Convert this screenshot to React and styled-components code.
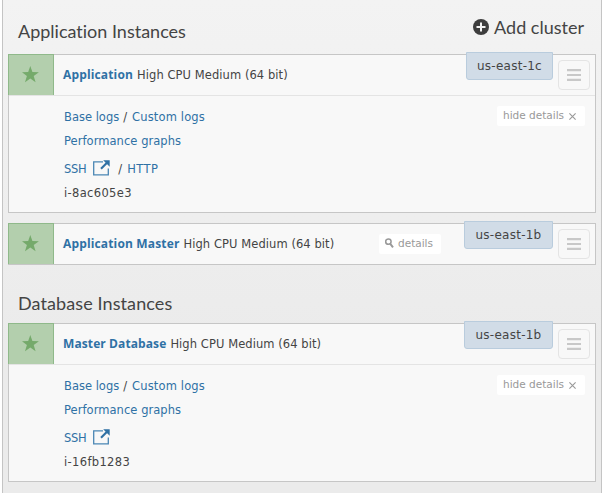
import React from "react";
import styled, { createGlobalStyle } from "styled-components";

const Global = createGlobalStyle`
  * { box-sizing: border-box; }
  body { margin: 0; background: #fff; overflow: hidden; }
`;

const Panel = styled.main`
  width: 600px;
  height: 493px;
  margin-left: 2px;
  padding: 0 5px;
  border: solid #c4c4c4;
  border-width: 0 1px;
  background: linear-gradient(#f3f3f3, #ebebeb 70%, #ebebeb);
  color: #444;
  font: 11.5px/24px "DejaVu Sans", sans-serif;
`;

const SectionHeader = styled.header`
  display: flex;
  justify-content: space-between;
  height: ${(p) => p.$height}px;
  padding: ${(p) => p.$top}px 12px 0 10px;
`;

const Title = styled.h2`
  margin: 0;
  font: 400 18px/24px Lato, sans-serif;
  font-variant-ligatures: none;
  letter-spacing: ${(p) => p.$spacing || 0}px;
`;

const AddButton = styled.button`
  display: flex;
  align-items: center;
  gap: 5px;
  height: 24px;
  margin-top: -4px;
  padding: 0;
  border: 0;
  background: none;
  color: #444;
  font: 400 18px/24px Lato, sans-serif;
`;

const Card = styled.article`
  height: ${(p) => (p.$open ? 159 : 42)}px;
  margin-bottom: 10px;
  border: 1px solid #c6c6c6;
  background: #f8f8f8;
`;

const CardRow = styled.div`
  display: flex;
  align-items: flex-start;
  height: ${(p) => (p.$open ? 41 : 40)}px;
  border-bottom: ${(p) => (p.$open ? "1px solid #e4e4e4" : "0")};
`;

const Status = styled.div`
  display: grid;
  place-items: center;
  flex: none;
  width: 46px;
  height: 41px;
  margin: -1px 9px 0 -1px;
  padding: 0 1px 1px 0;
  border: 1px solid #8fb98a;
  border-bottom: 0;
  background: #b3cfad;
`;

const Name = styled.div`
  flex: 1;
  display: flex;
  gap: 4px;
  line-height: 40px;
  white-space: nowrap;
`;

const Strong = styled.a`
  color: #2f71a5;
  font: 700 12px/40px "Open Sans", sans-serif;
  letter-spacing: ${(p) => p.$spacing}px;
`;

const Size = styled.span`
  letter-spacing: 0.07px;
`;

const Pill = styled.button`
  display: flex;
  align-items: center;
  flex: none;
  gap: ${(p) => p.$gap}px;
  width: ${(p) => p.$width}px;
  height: 20px;
  margin: ${(p) => p.$margin || "0"};
  padding: 0 0 2px 6px;
  border: 0;
  border-radius: 2px;
  background: #fff;
  color: #999;
  font: 10.5px/18px "DejaVu Sans", sans-serif;
`;

const Zone = styled.div`
  flex: none;
  height: 28px;
  margin: -3px 5px 0 0;
  width: ${(p) => p.$width}px;
  border: 1px solid #b9ccdd;
  border-radius: 0 0 3px 3px;
  background: #d1dce7;
  font-size: 12px;
  line-height: 26px;
  text-align: center;
  letter-spacing: 0.25px;
`;

const MenuButton = styled.button`
  display: grid;
  place-items: center;
  flex: none;
  width: 32px;
  height: 30px;
  margin: 5px 5px 0 0;
  padding: 0;
  border: 1px solid #e4e4e4;
  border-radius: 4px;
  background: #f8f8f8;
`;

const Details = styled.div`
  display: flex;
  justify-content: space-between;
  padding: 9px 10px 0 55px;
`;

const Links = styled.div`
  display: flex;
  flex-direction: column;
`;

const LinkLine = styled.div`
  display: flex;
  align-items: center;
  height: 24px;
  margin-top: ${(p) => (p.$gap ? 4 : 0)}px;
  letter-spacing: ${(p) => p.$spacing || 0}px;
  white-space: pre;
`;

const Link = styled.a`
  color: #2f71a5;
  letter-spacing: ${(p) => (p.$spacing ? `${p.$spacing}px` : "inherit")};
`;

const Slash = styled.span`
  margin: 0 5px 0 4px;
`;

const External = styled.svg`
  margin: -3px 4px 0 7px;
`;

function Star() {
  return (
    <svg width="18" height="17" viewBox="0.7 0 18 17">
      <path fill="#75aa6b" d="M9 0 11.1 6.1 17.6 6.2 12.4 10.1 14.3 16.3 9 12.6 3.7 16.3 5.6 10.1.7 6.2 6.9 6.1Z" />
    </svg>
  );
}

function MenuIcon() {
  return (
    <svg width="14" height="12" viewBox="0 0 14 12">
      <path fill="none" stroke="#c8c8c8" strokeWidth="2.2" d="M0 1.1H14M0 6H14M0 10.9H14" />
    </svg>
  );
}

function ExternalIcon() {
  return (
    <External width="17" height="16" viewBox="0 0 17 16">
      <path fill="none" stroke="#4a86b4" strokeWidth="1.3" d="M10 1.8H.7V14.8H15.3V8.5" />
      <path fill="none" stroke="#2f71a5" strokeWidth="2.2" d="M8 8.8 14 2.8" />
      <path fill="#2f71a5" d="M10.2.3H16.7V6.8Z" />
    </External>
  );
}

function PlusIcon() {
  return (
    <svg width="16" height="16" viewBox="0 0 16 16">
      <circle cx="8" cy="8" r="8" fill="#3d3d3d" />
      <path stroke="#f3f3f3" strokeWidth="2" d="M8 3.5V12.5M3.5 8H12.5" />
    </svg>
  );
}

function SearchIcon() {
  return (
    <svg width="9" height="10" viewBox="0 0 9 10">
      <circle cx="3.4" cy="3.6" r="2.7" fill="none" stroke="#999" strokeWidth="1.5" />
      <path stroke="#999" strokeWidth="2" d="M5.1 5.6 8 9.3" />
    </svg>
  );
}

const Close = styled.svg`
  margin-top: 2px;
`;

function CloseIcon() {
  return (
    <Close width="7" height="7" viewBox="0 0 7 7">
      <path stroke="#999" strokeWidth="1.1" d="M.4.4 6.6 6.6M6.6.4.4 6.6" />
    </Close>
  );
}

function Instance({ name, spacing, zone, zoneWidth = 89, id, http }) {
  const open = Boolean(id);
  return (
    <Card $open={open}>
      <CardRow $open={open}>
        <Status><Star /></Status>
        <Name>
          <Strong $spacing={spacing}>{name}</Strong>
          <Size>High CPU Medium (64 bit)</Size>
        </Name>
        {!open && (
          <Pill $width={62} $gap={4} $margin="10px 23px 0 0"><SearchIcon />details</Pill>
        )}
        <Zone $width={zoneWidth}>{zone}</Zone>
        <MenuButton><MenuIcon /></MenuButton>
      </CardRow>
      {open && (
        <Details>
          <Links>
            <LinkLine>
              <Link>Base logs</Link><Slash>/</Slash><Link $spacing={0.15}>Custom logs</Link>
            </LinkLine>
            <LinkLine $spacing={0.05}><Link>Performance graphs</Link></LinkLine>
            <LinkLine $gap>
              <Link $spacing={-0.3}>SSH</Link>
              <ExternalIcon />
              {http && <><Slash>/</Slash><Link $spacing={0.4}>HTTP</Link></>}
            </LinkLine>
            <LinkLine $spacing={0.35}>{id}</LinkLine>
          </Links>
          <Pill $width={88} $gap={5} $margin="1px 0 0"><span>hide details</span><CloseIcon /></Pill>
        </Details>
      )}
    </Card>
  );
}

export default function App() {
  return (
    <>
      <Global />
      <Panel>
        <SectionHeader $height={54} $top={19}>
          <Title>Application Instances</Title>
          <AddButton><PlusIcon />Add cluster</AddButton>
        </SectionHeader>
        <Instance name="Application" spacing={0.15} zone="us-east-1c" zoneWidth={87} id="i-8ac605e3" http />
        <Instance name="Application Master" spacing={0.15} zone="us-east-1b" />
        <SectionHeader $height={48} $top={16}>
          <Title $spacing={0.1}>Database Instances</Title>
        </SectionHeader>
        <Instance name="Master Database" spacing={0.1} zone="us-east-1b" id="i-16fb1283" />
      </Panel>
    </>
  );
}
